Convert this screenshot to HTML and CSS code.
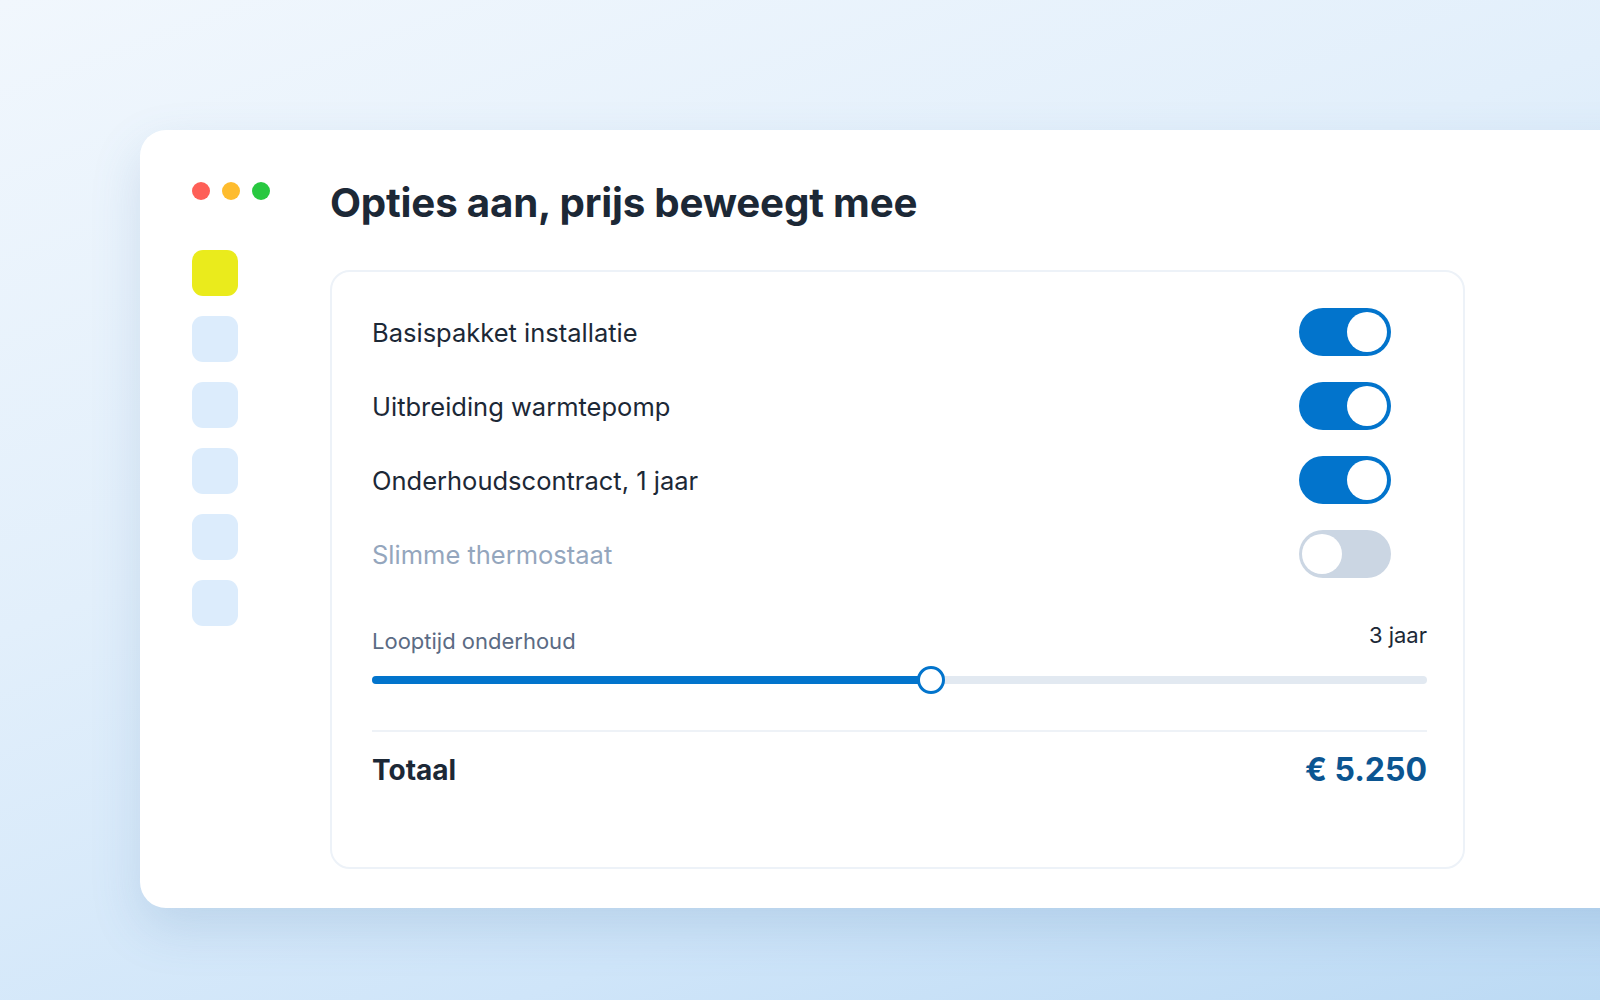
FILE: index.html
```html
<!DOCTYPE html>
<html lang="nl">
<head>
<meta charset="utf-8">
<title>Opties aan, prijs beweegt mee</title>
<link rel="stylesheet" href="styles.css">
</head>
<body>
<div class="stage">
  <div class="window">
    <aside class="sidebar">
      <div class="lights">
        <span class="light red"></span>
        <span class="light amber"></span>
        <span class="light green"></span>
      </div>
      <nav class="nav">
        <span class="nav-item active"></span>
        <span class="nav-item"></span>
        <span class="nav-item"></span>
        <span class="nav-item"></span>
        <span class="nav-item"></span>
        <span class="nav-item"></span>
      </nav>
    </aside>
    <main class="main">
      <h1 class="title">Opties aan, prijs beweegt mee</h1>
      <section class="card">
        <div class="options">
          <div class="option">
            <span class="option-label">Basispakket installatie</span>
            <span class="toggle on"><span class="knob"></span></span>
          </div>
          <div class="option">
            <span class="option-label">Uitbreiding warmtepomp</span>
            <span class="toggle on"><span class="knob"></span></span>
          </div>
          <div class="option">
            <span class="option-label">Onderhoudscontract, 1 jaar</span>
            <span class="toggle on"><span class="knob"></span></span>
          </div>
          <div class="option disabled">
            <span class="option-label">Slimme thermostaat</span>
            <span class="toggle off"><span class="knob"></span></span>
          </div>
        </div>
        <div class="slider-block">
          <div class="slider-head">
            <span class="slider-label">Looptijd onderhoud</span>
            <span class="slider-value">3 jaar</span>
          </div>
          <div class="track">
            <div class="fill" style="width: 53%"><span class="thumb"></span></div>
          </div>
        </div>
        <div class="total">
          <span class="total-label">Totaal</span>
          <span class="total-value">€ 5.250</span>
        </div>
      </section>
    </main>
  </div>
</div>
</body>
</html>
```
FILE: styles.css
```css
* { box-sizing: border-box; }
html, body { margin: 0; padding: 0; }
body {
  width: 1600px;
  height: 1000px;
  overflow: hidden;
  font-family: Inter, "Noto Sans", "Liberation Sans", sans-serif;
  color: #1c2836;
  background: linear-gradient(160deg, #f1f7fd 0%, #e2effb 40%, #cfe5f9 75%, #bcdaf4 100%);
}
.stage {
  padding: 130px 0 0 140px;
}
.window {
  width: 1520px;
  height: 778px;
  background: #ffffff;
  border-radius: 26px 0 0 26px;
  box-shadow: 0 20px 50px rgba(70, 120, 170, 0.18);
  display: flex;
  padding: 52px 0 0 52px;
}
.sidebar {
  width: 46px;
  display: flex;
  flex-direction: column;
  gap: 50px;
}
.lights {
  display: flex;
  gap: 12px;
  height: 18px;
}
.light {
  width: 18px;
  height: 18px;
  border-radius: 50%;
  flex: none;
}
.red { background: #fe5f57; }
.amber { background: #febc2e; }
.green { background: #28c840; }
.nav {
  display: flex;
  flex-direction: column;
  gap: 20px;
}
.nav-item {
  width: 46px;
  height: 46px;
  border-radius: 11px;
  background: #dcecfc;
}
.nav-item.active { background: #eaeb1c; }
.main {
  margin-left: 92px;
  width: 1135px;
}
.title {
  margin: -4px 0 0 0;
  font-size: 40.3px;
  line-height: 50px;
  font-weight: 700;
  letter-spacing: -0.2px;
  color: #1c2836;
}
.card {
  margin-top: 42px;
  height: 599px;
  border: 2px solid #edf2f8;
  border-radius: 20px;
  padding: 36px 36px 0 40px;
}
.options {
  display: flex;
  flex-direction: column;
  gap: 26px;
  padding-right: 36px;
}
.option {
  display: flex;
  align-items: center;
  justify-content: space-between;
  height: 48px;
}
.option-label {
  font-size: 25.5px;
  font-weight: 400;
  color: #1c2836;
}
.option.disabled .option-label { color: #94a6bd; }
.toggle {
  width: 92px;
  height: 48px;
  border-radius: 24px;
  padding: 4px;
  display: flex;
}
.toggle.on { background: #0274cc; justify-content: flex-end; }
.toggle.off { background: #cbd6e3; justify-content: flex-start; padding: 4px 3px; }
.knob {
  width: 40px;
  height: 40px;
  border-radius: 50%;
  background: #ffffff;
}
.slider-block {
  margin-top: 49px;
}
.slider-head {
  display: flex;
  justify-content: space-between;
  align-items: flex-end;
}
.slider-label {
  font-size: 22px;
  color: #5b6b84;
  line-height: 28px;
}
.slider-value {
  font-size: 22px;
  color: #1c2836;
  line-height: 28px;
  position: relative;
  top: -6px;
}
.track {
  margin-top: 21px;
  height: 8px;
  border-radius: 4px;
  background: #e2e9f1;
}
.fill {
  height: 8px;
  border-radius: 4px;
  background: #0274cc;
  position: relative;
}
.thumb {
  position: absolute;
  right: -14px;
  top: -10px;
  width: 28px;
  height: 28px;
  border-radius: 50%;
  background: #ffffff;
  border: 3px solid #0274cc;
}
.total {
  margin-top: 46px;
  border-top: 2px solid #eef2f7;
  padding-top: 18px;
  display: flex;
  justify-content: space-between;
  align-items: center;
}
.total-label {
  font-size: 28px;
  font-weight: 700;
  color: #1c2836;
}
.total-value {
  font-size: 32px;
  font-weight: 700;
  color: #0b5591;
}
```
